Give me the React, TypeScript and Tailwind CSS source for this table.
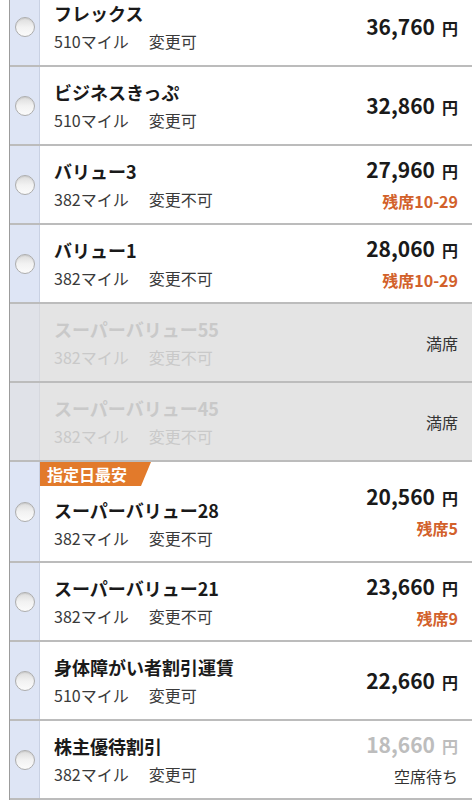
import React from "react";

type Row = {
  name: string;
  miles: string;
  change: string;
  price?: string;
  priceMuted?: boolean;
  avail?: string;
  availKind?: "orange" | "plain";
  disabled?: boolean;
  badge?: string;
};

const rows: Row[] = [
  { name: "フレックス", miles: "510", change: "変更可", price: "36,760" },
  { name: "ビジネスきっぷ", miles: "510", change: "変更可", price: "32,860" },
  { name: "バリュー3", miles: "382", change: "変更不可", price: "27,960", avail: "残席10-29", availKind: "orange" },
  { name: "バリュー1", miles: "382", change: "変更不可", price: "28,060", avail: "残席10-29", availKind: "orange" },
  { name: "スーパーバリュー55", miles: "382", change: "変更不可", avail: "満席", availKind: "plain", disabled: true },
  { name: "スーパーバリュー45", miles: "382", change: "変更不可", avail: "満席", availKind: "plain", disabled: true },
  { name: "スーパーバリュー28", miles: "382", change: "変更不可", price: "20,560", avail: "残席5", availKind: "orange", badge: "指定日最安" },
  { name: "スーパーバリュー21", miles: "382", change: "変更不可", price: "23,660", avail: "残席9", availKind: "orange" },
  { name: "身体障がい者割引運賃", miles: "510", change: "変更可", price: "22,660" },
  { name: "株主優待割引", miles: "382", change: "変更可", price: "18,660", priceMuted: true, avail: "空席待ち", availKind: "plain" },
];

function Radio() {
  return (
    <div className="w-[20px] h-[20px] rounded-full border border-[#adadad] bg-linear-to-b from-[#dcdcdc] via-[#f2f2f2] to-[#fbfbfb] shadow-[inset_0_1px_1px_rgba(0,0,0,0.08)]" />
  );
}

function FareRow({ r }: { r: Row }) {
  const nameColor = r.disabled ? "text-[#c9c9c9]" : "text-[#1a1a1a]";
  const subColor = r.disabled ? "text-[#c9c9c9]" : "text-[#3a3a3a]";
  return (
    <div className={`flex border-b-2 border-[#bcbcbc] ${r.disabled ? "bg-[#e4e4e4]" : "bg-white"}`}>
      <div
        className={`w-[30px] shrink-0 flex items-center justify-center border-r ${
          r.disabled ? "bg-[#e0e2e8] border-[#d6d8de]" : "bg-[#dee5f5] border-[#c9d1e3]"
        }`}
      >
        {!r.disabled && <Radio />}
      </div>
      <div className="flex-1 flex items-center">
        <div className="flex-1 flex flex-col">
          {r.badge && (
            <div className="h-[24px] w-[111px] bg-[#e27a2b] text-white text-[16px] font-bold leading-[24px] pl-[7px] [clip-path:polygon(0_0,100%_0,calc(100%-10px)_100%,0_100%)]">
              {r.badge}
            </div>
          )}
          <div className={`${r.badge ? "h-[75px] pt-[10px]" : "h-[77px] pt-[11px]"} pl-[14px]`}>
            <div className={`text-[18px] font-bold leading-[28px] ${nameColor}`}>{r.name}</div>
            <div className={`text-[16px] leading-[28px] ${subColor} flex`}>
              <span>{r.miles}マイル</span>
              <span className="ml-[20px]">{r.change}</span>
            </div>
          </div>
        </div>
        <div className="pr-[14px] flex flex-col items-end">
          {r.price && (
            <div className={`leading-[30px] ${r.priceMuted ? "text-[#bdbdbd]" : "text-[#1a1a1a]"}`}>
              <span className="text-[21px] font-bold">{r.price}</span>
              <span className="text-[16px] font-bold ml-[7px]">円</span>
            </div>
          )}
          {r.avail && (
            <div
              className={`leading-[30px] ${
                r.availKind === "orange" ? "text-[16px] font-bold text-[#d2612b]" : "text-[16px] text-[#333333]"
              }`}
            >
              {r.avail}
            </div>
          )}
        </div>
      </div>
    </div>
  );
}

export default function App() {
  return (
    <div className="w-[472px] h-[800px] overflow-hidden bg-white font-['Noto_Sans_CJK_JP','Noto_Sans',sans-serif]">
      <div className="ml-[9px] mt-[-12px] border-l border-[#9c9c9c]">
        {rows.map((r, i) => (
          <FareRow key={i} r={r} />
        ))}
      </div>
    </div>
  );
}
